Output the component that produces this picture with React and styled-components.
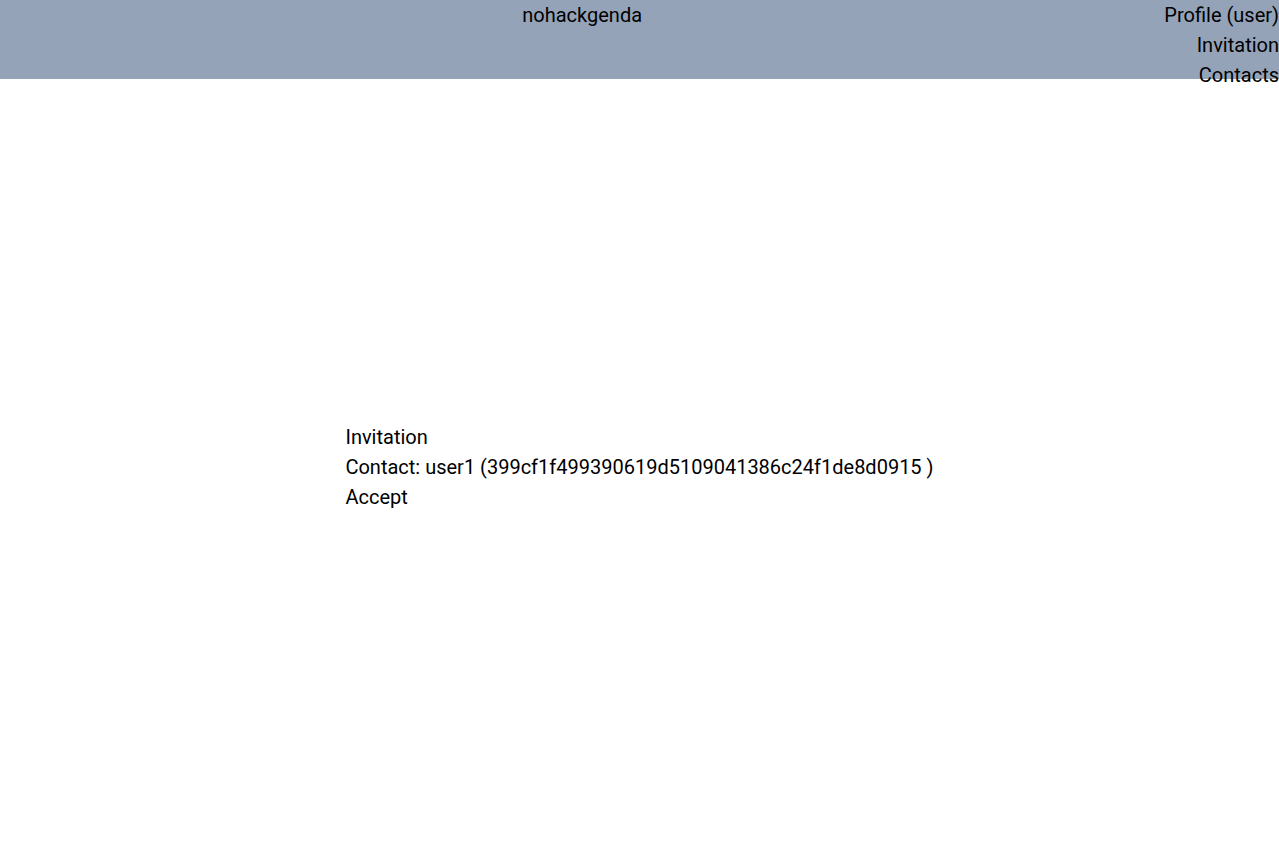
import React from "react";
import styled, { createGlobalStyle } from "styled-components";

const Global = createGlobalStyle`
  html, body { margin: 0; padding: 0; }
  body {
    font-family: Roboto, "Noto Sans", sans-serif;
    font-size: 20px;
    line-height: 30px;
    color: #000;
    background: #fff;
  }
`;

const Page = styled.div`
  display: flex;
  flex-direction: column;
  min-height: 100vh;
`;

const Header = styled.header`
  display: flex;
  justify-content: space-between;
  align-items: flex-start;
  height: 79px;
  background: #94a3b8;
`;

const Title = styled.div``;

const Nav = styled.nav`
  display: flex;
  flex-direction: column;
  align-items: flex-end;
`;

const NavLink = styled.a`
  color: #000;
  text-decoration: none;
  cursor: pointer;
`;

const Main = styled.main`
  flex: 1;
  display: flex;
  align-items: center;
  justify-content: center;
`;

const Card = styled.div`
  display: flex;
  flex-direction: column;
`;

const Line = styled.div``;

export default function App() {
  return (
    <>
      <Global />
      <Page>
        <Header>
          <div />
          <Title>nohackgenda</Title>
          <Nav>
            <NavLink>Profile (user)</NavLink>
            <NavLink>Invitation</NavLink>
            <NavLink>Contacts</NavLink>
          </Nav>
        </Header>
        <Main>
          <Card>
            <Line>Invitation</Line>
            <Line>Contact: user1 (399cf1f499390619d5109041386c24f1de8d0915 )</Line>
            <Line>Accept</Line>
          </Card>
        </Main>
      </Page>
    </>
  );
}
